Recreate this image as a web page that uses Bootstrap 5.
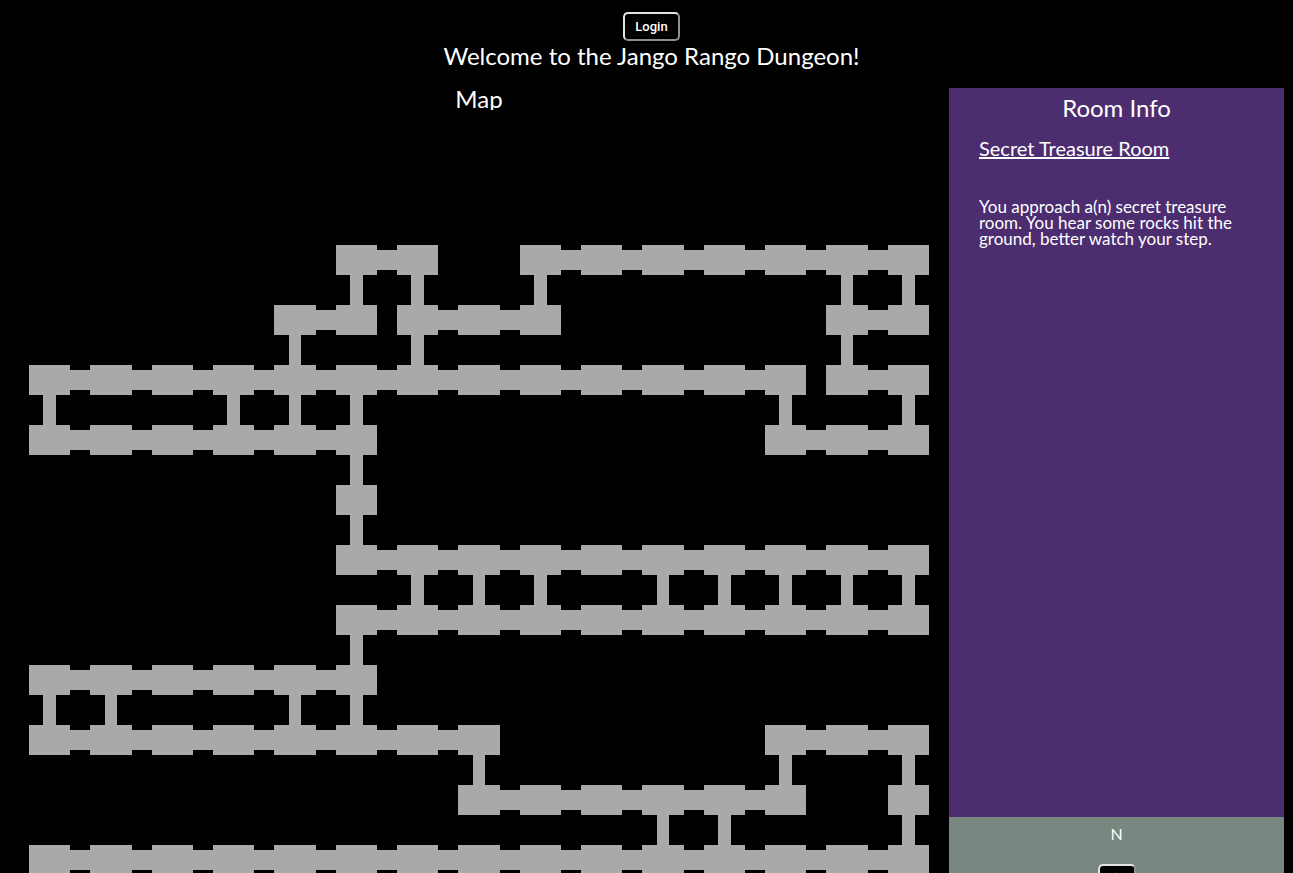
<!DOCTYPE html>
<html lang="en">
<head>
<meta charset="utf-8">
<meta name="viewport" content="width=device-width, initial-scale=1">
<title>Jango Rango Dungeon</title>
<link href="https://cdn.jsdelivr.net/npm/bootstrap@5.3.0/dist/css/bootstrap.min.css" rel="stylesheet">
<style>
  body { background: #000; color: #fff; font-family: Lato, "Open Sans", sans-serif; font-size: 16px; line-height: 16px; }
  .page { padding: 12px 9px 0 19px; height: 100vh; }
  .title-text { font-size: 24px; line-height: 30px; font-weight: 400; }
  .game-btn { background: #000; color: #fff; border: 2px outset #e3e3e3; border-radius: 5px; font: 500 13px/15px Roboto, sans-serif; padding: 5px 10px; }
  .game { gap: 10px; margin-top: 17px; }
  .map-pane { min-width: 0; }
  .map-title { height: 22px; line-height: 22px; }
  .dungeon { display: grid; grid-template-columns: repeat(15, 1fr); grid-auto-rows: 30px; gap: 30px 20px; padding: 15px 10px; }
  .cell { position: relative; }
  .room { background: #a9a9a9; }
  .east::before { content: ""; position: absolute; left: 100%; top: 5px; width: 20px; height: 20px; background: #a9a9a9; }
  .south::after { content: ""; position: absolute; left: 35%; top: 100%; width: 30%; height: 30px; background: #a9a9a9; }
  .side { width: 335px; }
  .info { background: #4c2d70; height: 729px; padding: 5px 30px; }
  .room-name { font-size: 20px; line-height: 24px; margin: 13px 0 39px; }
  .room-text { font-size: 17px; }
  .controls { background: #78877f; padding: 9px; }
  .controls-label { margin-bottom: 22px; }
</style>
</head>
<body>
<div class="page d-flex flex-column overflow-hidden">
  <header class="text-center">
    <button type="button" class="game-btn d-block mx-auto">Login</button>
    <h1 class="title-text m-0">Welcome to the Jango Rango Dungeon!</h1>
  </header>
  <main class="game d-flex align-items-start">
    <section class="map-pane flex-grow-1">
      <h2 class="title-text map-title text-center overflow-hidden m-0">Map</h2>
      <div class="dungeon" id="dungeon"></div>
    </section>
    <aside class="side flex-shrink-0">
      <section class="info">
        <h2 class="title-text text-center m-0">Room Info</h2>
        <h3 class="room-name fw-normal text-decoration-underline">Secret Treasure Room</h3>
        <p class="room-text m-0">You approach a(n) secret treasure room. You hear some rocks hit the ground, better watch your step.</p>
      </section>
      <section class="controls text-center">
        <p class="controls-label">N</p>
        <button type="button" class="game-btn" aria-label="Go north">
          <svg width="14" height="16" viewBox="0 0 14 16" fill="none" stroke="#fff" stroke-width="2"><path d="M7 15V2M2 7l5-5 5 5"/></svg>
        </button>
      </section>
    </aside>
  </main>
</div>
<script src="https://cdn.jsdelivr.net/npm/bootstrap@5.3.0/dist/js/bootstrap.bundle.min.js"></script>
<script>
  // o = room, - = passage east, | = passage south
  const dungeonMap = [
    "                             ",
    "                             ",
    "                             ",
    "                             ",
    "          o-o   o-o-o-o-o-o-o",
    "          | |   |         | |",
    "        o-o o-o-o         o-o",
    "        |   |             |  ",
    "o-o-o-o-o-o-o-o-o-o-o-o-o o-o",
    "|     | | |             |   |",
    "o-o-o-o-o-o             o-o-o",
    "          |                  ",
    "          o                  ",
    "          |                  ",
    "          o-o-o-o-o-o-o-o-o-o",
    "            | | |   | | | | |",
    "          o-o-o-o-o-o-o-o-o-o",
    "          |                  ",
    "o-o-o-o-o-o                  ",
    "| |     | |                  ",
    "o-o-o-o-o-o-o-o         o-o-o",
    "              |         |   |",
    "              o-o-o-o-o-o   o",
    "                    | |     |",
    "o-o-o-o-o-o-o-o-o-o-o-o-o-o-o",
    "                             "
  ];
  const dungeon = document.getElementById("dungeon");
  for (let y = 0; y < dungeonMap.length; y += 2) {
    for (let x = 0; x < 29; x += 2) {
      const cell = document.createElement("div");
      cell.className = "cell";
      if (dungeonMap[y][x] === "o") cell.classList.add("room");
      if (dungeonMap[y][x + 1] === "-") cell.classList.add("east");
      if (dungeonMap[y + 1][x] === "|") cell.classList.add("south");
      dungeon.append(cell);
    }
  }
</script>
</body>
</html>
